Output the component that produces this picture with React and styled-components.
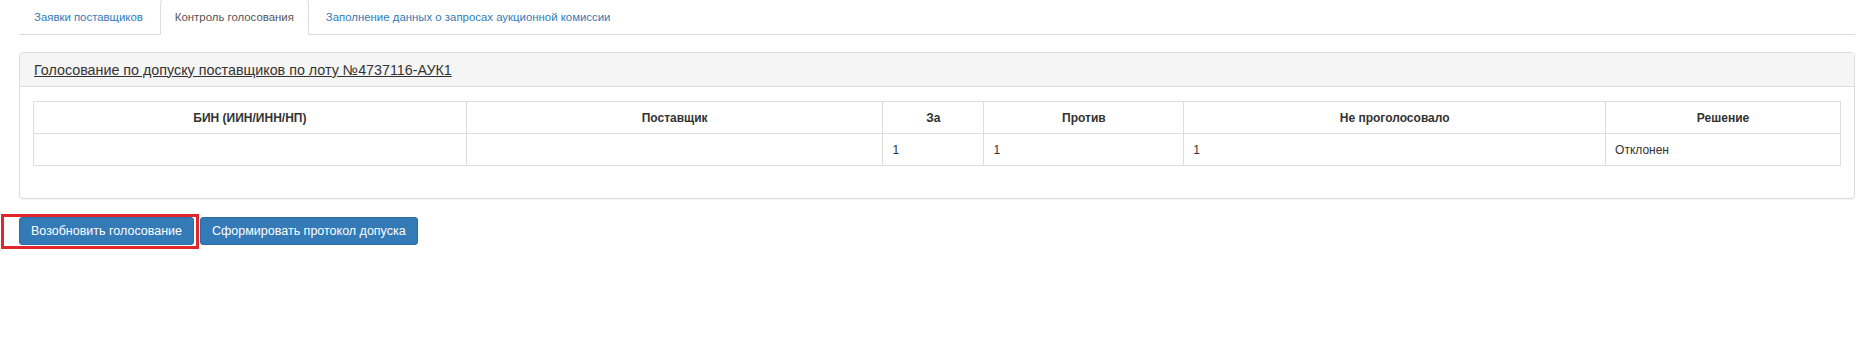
import styled, { createGlobalStyle } from 'styled-components';

const GlobalStyle = createGlobalStyle`
	body {
		margin: 0;
		background: #fff;
		font-family: 'Liberation Sans', Arial, sans-serif;
		color: #333;
	}
`;

const tabs = [
	{ label: 'Заявки поставщиков' },
	{ label: 'Контроль голосования', active: true },
	{ label: 'Заполнение данных о запросах аукционной комиссии' },
];

const columns = [
	{ title: 'БИН (ИИН/ИНН/НП)', width: '23.95%' },
	{ title: 'Поставщик', width: '23.06%' },
	{ title: 'За', width: '5.59%' },
	{ title: 'Против', width: '11.06%' },
	{ title: 'Не проголосовало', width: '23.34%' },
	{ title: 'Решение', width: '13%' },
];

const rows = [['', '', '1', '1', '1', 'Отклонен']];

export default function App() {
	return (
		<>
			<GlobalStyle />
			<Page>
				<Tabs>
					{tabs.map((t) => (
						<Tab key={t.label} $active={t.active}>
							{t.label}
						</Tab>
					))}
				</Tabs>

				<Panel>
					<PanelHeading>
						<PanelTitle href="#">Голосование по допуску поставщиков по лоту №4737116-АУК1</PanelTitle>
					</PanelHeading>
					<PanelBody>
						<Table>
							<colgroup>
								{columns.map((c) => (
									<col key={c.title} style={{ width: c.width }} />
								))}
							</colgroup>
							<thead>
								<tr>
									{columns.map((c) => (
										<Th key={c.title}>{c.title}</Th>
									))}
								</tr>
							</thead>
							<tbody>
								{rows.map((r, i) => (
									<tr key={i}>
										{r.map((cell, j) => (
											<Td key={j}>{cell}</Td>
										))}
									</tr>
								))}
							</tbody>
						</Table>
					</PanelBody>
				</Panel>

				<Actions>
					<Highlighted>
						<Button>Возобновить голосование</Button>
					</Highlighted>
					<Button $inRow>Сформировать протокол допуска</Button>
				</Actions>
			</Page>
		</>
	);
}

const Page = styled.div`
	padding: 0 12px 0 19px;
`;

const Tabs = styled.ul`
	display: flex;
	margin: -1px 0 0;
	padding: 0;
	list-style: none;
	border-bottom: 1px solid #ddd;
`;

const Tab = styled.li`
	display: flex;
	align-items: center;
	height: 34px;
	margin-right: 2px;
	margin-bottom: -1px;
	padding: 0 14px;
	font-size: 11.4px;
	color: ${({ $active }) => ($active ? '#555' : '#337ab7')};
	background: ${({ $active }) => ($active ? '#fff' : 'transparent')};
	border: 1px solid ${({ $active }) => ($active ? '#ddd' : 'transparent')};
	border-bottom-color: ${({ $active }) => ($active ? '#fff' : 'transparent')};
	border-radius: 4px 4px 0 0;
	cursor: pointer;
`;

const Panel = styled.div`
	margin-top: 17px;
	background: #fff;
	border: 1px solid #ddd;
	border-radius: 4px;
	box-shadow: 0 1px 1px rgba(0, 0, 0, 0.05);
`;

const PanelHeading = styled.div`
	display: flex;
	align-items: center;
	height: 33px;
	padding: 0 14px;
	background: #f5f5f5;
	border-bottom: 1px solid #ddd;
	border-radius: 3px 3px 0 0;
`;

const PanelTitle = styled.a`
	font-size: 14.3px;
	color: #333;
	text-decoration: underline;
`;

const PanelBody = styled.div`
	padding: 14px 13px 32px;
`;

const Table = styled.table`
	width: 100%;
	table-layout: fixed;
	border-collapse: collapse;
	font-size: 12px;
`;

const Th = styled.th`
	height: 31px;
	padding: 0 9px;
	border: 1px solid #ddd;
	font-weight: bold;
	text-align: center;
	color: #333;
`;

const Td = styled.td`
	height: 31px;
	padding: 0 9px;
	border: 1px solid #ddd;
	color: #333;
`;

const Actions = styled.div`
	display: flex;
	align-items: flex-start;
	margin-top: 15px;
`;

/* red annotation frame drawn round the first button */
const Highlighted = styled.div`
	display: flex;
	margin-left: -18px;
	padding: 0 2px 1px 15px;
	border: 3px solid #e3262b;
`;

const Button = styled.button`
	height: 28px;
	padding: 0 11px;
	margin: ${({ $inRow }) => ($inRow ? '3px 0 0 1px' : '0')};
	font-family: 'Liberation Sans', Arial, sans-serif;
	font-size: 12.5px;
	color: #fff;
	background: #337ab7;
	border: 1px solid #2e6da4;
	border-radius: 3px;
	cursor: pointer;
`;
